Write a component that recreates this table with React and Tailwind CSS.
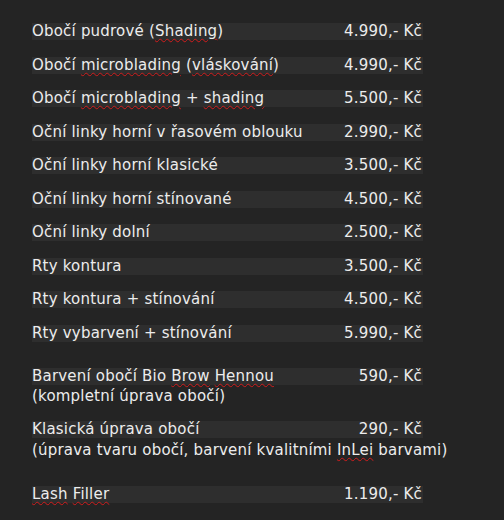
const items = [
  { name: 'Obočí pudrové (Shading)', price: '4.990,- Kč', typos: ['Shading'] },
  { name: 'Obočí microblading (vláskování)', price: '4.990,- Kč', typos: ['microblading', 'vláskování'] },
  { name: 'Obočí microblading + shading', price: '5.500,- Kč', typos: ['microblading', 'shading'] },
  { name: 'Oční linky horní v řasovém oblouku', price: '2.990,- Kč' },
  { name: 'Oční linky horní klasické', price: '3.500,- Kč' },
  { name: 'Oční linky horní stínované', price: '4.500,- Kč' },
  { name: 'Oční linky dolní', price: '2.500,- Kč' },
  { name: 'Rty kontura', price: '3.500,- Kč' },
  { name: 'Rty kontura + stínování', price: '4.500,- Kč' },
  { name: 'Rty vybarvení + stínování', price: '5.990,- Kč' },
];

function Marked({ text, typos = [] }) {
  const words = text.split(' ');
  return (
    <>
      {words.map((w, i) => {
        const core = w.replace(/[()]/g, '');
        const bad = typos.includes(core);
        const pre = w.startsWith('(') ? '(' : '';
        const post = w.endsWith(')') ? ')' : '';
        return (
          <span key={i}>
            {i > 0 && ' '}
            {pre}
            {bad ? <span className="underline decoration-wavy decoration-[#d01c1c] decoration-1 underline-offset-2">{core}</span> : core}
            {post}
          </span>
        );
      })}
    </>
  );
}

function Strip({ name, price, typos }) {
  return (
    <div className="flex h-[17px] items-center justify-between bg-[#2e2e2e] leading-[17px]">
      <span className="whitespace-pre"><Marked text={name} typos={typos} /></span>
      <span className="pr-[1px]">{price}</span>
    </div>
  );
}

export default function App() {
  return (
    <div className="min-h-[520px] w-[504px] bg-[#242424] text-[15px] tracking-[0.2px] text-[#ececec]" style={{ fontFamily: '"DejaVu Sans", Verdana, sans-serif' }}>
      <div className="w-[423px] pl-[32px] pt-[23px]">
        <div className="flex flex-col gap-[16.5px]">
          {items.map((it) => (
            <Strip key={it.name} {...it} />
          ))}
        </div>

        <div className="mt-[26px]">
          <Strip name="Barvení obočí Bio Brow Hennou" price="590,- Kč" typos={['Brow', 'Hennou']} />
          <div className="mt-[3.5px] leading-[17px]">(kompletní úprava obočí)</div>
        </div>

        <div className="mt-[16px]">
          <Strip name="Klasická úprava obočí" price="290,- Kč" />
          <div className="mt-[3.5px] whitespace-nowrap leading-[17px]">
            <Marked text="(úprava tvaru obočí, barvení kvalitními InLei barvami)" typos={['InLei']} />
          </div>
        </div>

        <div className="mt-[27px]">
          <Strip name="Lash Filler" price="1.190,- Kč" typos={['Lash', 'Filler']} />
        </div>
      </div>
    </div>
  );
}
